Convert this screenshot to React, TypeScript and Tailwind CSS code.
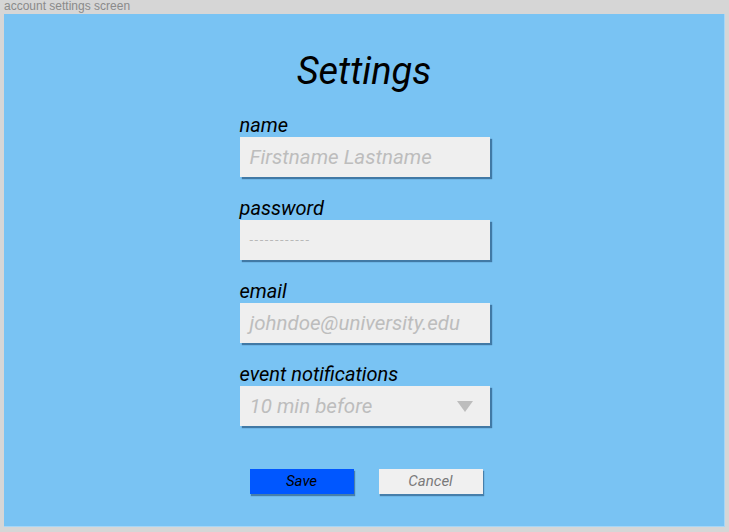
import React from "react";

const Field = ({ label, children }: { label: string; children: React.ReactNode }) => (
  <div className="flex flex-col">
    <div className="text-[20px] leading-[24px] text-black italic">{label}</div>
    <div className="h-[40px] w-[250px] bg-[#efefef] shadow-[2px_2px_1px_rgba(20,60,100,0.55)] flex items-center pl-[10px] pr-[17px] text-[20.5px] text-[#bdbdbd] italic">
      {children}
    </div>
  </div>
);

export default function App() {
  return (
    <div className="w-[729px] h-[532px] bg-[#d6d6d6] font-['Roboto',sans-serif] flex flex-col">
      <div className="h-[14px] pl-[4px] text-[12px] leading-[13px] text-[#8a8a8a] font-['Liberation_Sans',sans-serif]">
        account settings screen
      </div>
      <div className="ml-[4px] w-[721px] h-[513px] bg-[#79c3f3] border-r border-b border-[#a6d6f6] flex flex-col items-center pt-[35px]">
        <h1 className="text-[38px] leading-[44px] italic text-black">Settings</h1>
        <div className="mt-[20px] flex flex-col gap-[19px] ml-[1px]">
          <Field label="name">Firstname Lastname</Field>
          <Field label="password">
            <span className="text-[#b8b8b8] text-[13px] tracking-[1.6px]">------------</span>
          </Field>
          <Field label="email">johndoe@university.edu</Field>
          <Field label="event notifications">
            <span className="flex-1">10 min before</span>
            <svg width="16" height="11" viewBox="0 0 16 11">
              <polygon points="0,0 16,0 8,11" fill="#bdbdbd" />
            </svg>
          </Field>
        </div>
        <div className="mt-[43px] flex gap-[25px] ml-[4px]">
          <button className="w-[104px] h-[25px] bg-[#0057ff] shadow-[1px_2px_1px_rgba(20,60,100,0.5)] text-[15px] italic text-black">
            Save
          </button>
          <button className="w-[104px] h-[25px] bg-[#f0f0f0] shadow-[1px_2px_1px_rgba(20,60,100,0.5)] text-[15px] italic text-[#7a7a7a]">
            Cancel
          </button>
        </div>
      </div>
    </div>
  );
}
